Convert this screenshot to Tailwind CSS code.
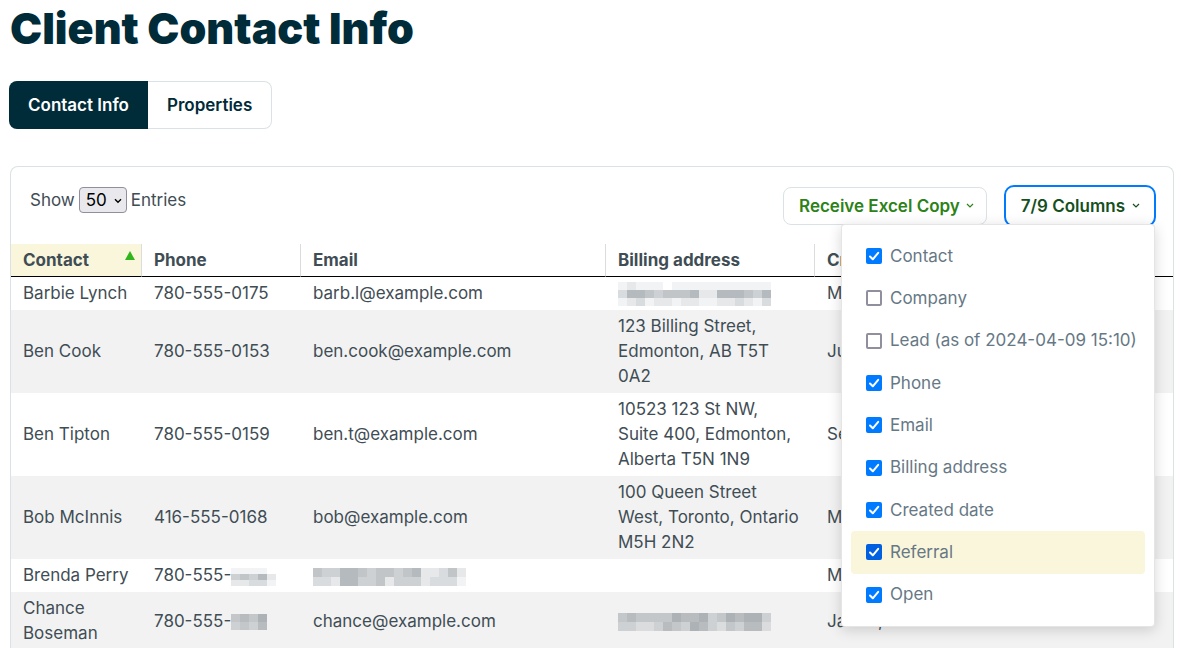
<!DOCTYPE html>
<html lang="en">
<head>
    <meta charset="UTF-8">
    <meta name="viewport" content="width=device-width, initial-scale=1.0">
    <title>Client Contact Info</title>
    <script src="https://cdn.jsdelivr.net/npm/@tailwindcss/browser@4"></script>
</head>
<body class="bg-white font-['Inter',sans-serif] text-[17px] leading-[25px] text-[#3f4d55] overflow-x-hidden">

    <div class="pl-[10px] pr-[7px]">
        <h1 class="text-[43px] leading-[56px] font-black text-[#002b38]">Client Contact Info</h1>

        <!-- Tabs -->
        <nav class="mt-[25px] -ml-px flex h-12 font-semibold" aria-label="Tabs">
            <a href="#" class="flex items-center rounded-l-lg bg-[#002b38] px-[19px] text-white" aria-current="page">Contact Info</a>
            <a href="#" class="flex items-center rounded-r-lg border border-l-0 border-[#dbe2e5] px-[19px] text-[#002b38]">Properties</a>
        </nav>

        <section class="mt-[37px] rounded-t-lg border border-b-0 border-[#dbe2e5]">
            <!-- Toolbar -->
            <div class="flex h-[77px] items-start justify-between pl-[19px] pr-[17px] pt-[18px]">
                <div class="flex items-center gap-1 pt-[2px]">
                    <label for="entries">Show</label>
                    <div class="relative flex">
                        <select id="entries" class="h-[26px] w-12 appearance-none rounded border border-[#8f8f9d] bg-[#e9e9ed] pl-[6px] text-black">
                            <option>50</option>
                        </select>
                        <svg class="pointer-events-none absolute right-[5px] top-[11px]" width="8" height="6" viewBox="0 0 8 6" fill="none" stroke="#000" stroke-width="1.4"><path d="M1 1.2 4 4.2 7 1.2"/></svg>
                    </div>
                    <span>Entries</span>
                </div>
                <div class="flex items-start gap-[17px]">
                    <button type="button" class="mt-[2px] flex h-[38px] items-center gap-[6px] rounded-lg border border-[#dbe2e5] pl-[15px] pr-3 font-semibold text-[#2c8217]">
                        Receive Excel Copy
                        <svg width="8" height="6" viewBox="0 0 8 6" fill="none" stroke="currentColor" stroke-width="1.2"><path d="M1 1 4 4 7 1"/></svg>
                    </button>
                    <div class="relative">
                        <button type="button" class="flex h-[42px] items-center gap-[7px] rounded-[10px] border-2 border-[#007aff] pl-[15px] pr-[14px] font-semibold text-[#154f1d]" aria-expanded="true">
                            7/9 Columns
                            <svg width="8" height="6" viewBox="0 0 8 6" fill="none" stroke="currentColor" stroke-width="1.2"><path d="M1 1 4 4 7 1"/></svg>
                        </button>
                        <!-- Column picker -->
                        <div id="columns" class="absolute right-px top-[39px] z-10 grid h-[403px] w-[314px] auto-rows-fr rounded border border-black/10 bg-white px-[9px] py-[10px] text-[#667885] shadow-[0_3px_14px_rgba(0,0,0,0.16)]"></div>
                    </div>
                </div>
            </div>

            <table class="w-full table-fixed border-separate border-spacing-0">
                <colgroup>
                    <col class="w-[131px]"><col class="w-[159px]"><col class="w-[305px]"><col class="w-[209px]"><col>
                </colgroup>
                <thead>
                    <tr class="text-left font-bold">
                        <th class="h-[33px] border-b border-b-black border-r border-r-[#dcdcdc] bg-[#faf6dc] px-3">
                            <div class="-mr-[6px] flex items-start justify-between">Contact
                                <svg class="mt-[3px]" width="10" height="9" viewBox="0 0 10 9" fill="#31b51c"><path d="M5 0 10 9H0z"/></svg>
                            </div>
                        </th>
                        <th class="border-b border-b-black border-r border-r-[#dcdcdc] px-3">Phone</th>
                        <th class="border-b border-b-black border-r border-r-[#dcdcdc] px-3">Email</th>
                        <th class="border-b border-b-black border-r border-r-[#dcdcdc] px-3">Billing address</th>
                        <th class="border-b border-b-black px-3 whitespace-nowrap">Created date</th>
                    </tr>
                </thead>
                <tbody id="clients"></tbody>
            </table>
        </section>
    </div>

    <script>
        const columns = [
            ['Contact', true],
            ['Company', false],
            ['Lead (as of 2024-04-09 15:10)', false],
            ['Phone', true],
            ['Email', true],
            ['Billing address', true],
            ['Created date', true],
            ['Referral', true, 'active'],
            ['Open', true]
        ];

        // Hidden values, one digit per block: 0 is clear, 6 is darkest
        const hidden = {
            phone1: ['11110', '45462', '22331'],
            phone2: ['4546', '3435'],
            email: ['54466545545622352', '33266445244423331'],
            address1: ['12111011111111111', '36654555622666546', '12312212211223213'],
            address2: ['45444465563465663', '33223543653243552']
        };

        const mosaic = (key, height) => {
            const rows = hidden[key];
            const width = rows[0].length * 9;
            const rects = rows.map((row, y) => [...row].map((n, x) =>
                `<rect x="${x * 9}" y="${y * height}" width="9" height="${height}" fill="#3f4d55" fill-opacity="${n * 0.065}"/>`).join('')).join('');
            return `<svg class="inline-block align-middle" width="${width}" height="${rows.length * height}" shape-rendering="crispEdges">${rects}</svg>`;
        };

        const clients = [
            ['Barbie Lynch', '780-555-0175', 'barb.l@example.com', mosaic('address1', 8), 'Mar 4, 2024'],
            ['Ben Cook', '780-555-0153', 'ben.cook@example.com', '123 Billing Street, Edmonton, AB T5T 0A2', 'Jul 7, 2023'],
            ['Ben Tipton', '780-555-0159', 'ben.t@example.com', '10523 123 St NW, Suite 400, Edmonton, Alberta T5N 1N9', 'Sep 7, 2023'],
            ['Bob McInnis', '416-555-0168', 'bob@example.com', '100 Queen Street West, Toronto, Ontario M5H 2N2', 'Mar 7, 2023'],
            ['Brenda Perry', '780-555-' + mosaic('phone1', 6), mosaic('email', 9), '', 'Mar 7, 2023'],
            ['Chance Boseman', '780-555-' + mosaic('phone2', 8), 'chance@example.com', mosaic('address2', 9), 'Jan 19, 2024']
        ];

        document.getElementById('columns').innerHTML = columns.map(([name, on, active]) => `
            <label class="flex items-center gap-2 rounded pl-[15px] whitespace-nowrap ${active ? 'bg-[#faf6dc]' : ''}">
                <span class="relative flex">
                    <input type="checkbox" ${on ? 'checked' : ''} class="peer size-4 appearance-none rounded-xs border-2 border-[#8f8f9d] bg-white ${active ? 'checked:border-[#0060df] checked:bg-[#0060df]' : 'checked:border-[#007aff] checked:bg-[#007aff]'}">
                    <svg class="pointer-events-none absolute inset-0 hidden peer-checked:block" width="16" height="16" viewBox="0 0 16 16" fill="none" stroke="#fff" stroke-width="2" stroke-linecap="round" stroke-linejoin="round"><path d="M4 8.5 6.8 11.3 12.2 4.8"/></svg>
                </span>
                ${name}
            </label>
        `).join('');

        document.getElementById('clients').innerHTML = clients.map(row => `
            <tr class="even:bg-[#f2f2f2]">
                ${row.map(cell => `<td class="px-3 py-1">${cell}</td>`).join('')}
            </tr>
        `).join('');
    </script>
</body>
</html>
